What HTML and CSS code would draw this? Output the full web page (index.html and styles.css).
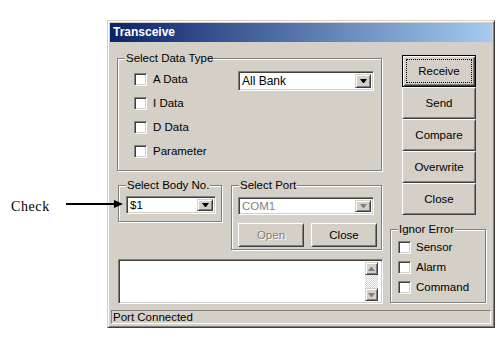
FILE: index.html
```html
<!DOCTYPE html>
<html lang="en">
<head>
  <meta charset="UTF-8" />
  <title>Transceive</title>
  <link rel="stylesheet" href="styles.css">
</head>
<body>
  <div class="page">
    <div class="note">
      <span class="note-text">Check</span>
      <svg class="note-arrow" width="60" height="10" viewBox="0 0 60 10">
        <line x1="0" y1="5" x2="50" y2="5" stroke="#000" stroke-width="2"/>
        <polygon points="48,1 57,5 48,9" fill="#000"/>
      </svg>
    </div>

    <div class="window">
      <div class="titlebar">Transceive</div>

      <div class="client">
        <div class="left">
          <fieldset class="group group-type">
            <legend>Select Data Type</legend>
            <div class="type-body">
              <div class="checks">
                <label class="check"><span class="box"></span>A Data</label>
                <label class="check"><span class="box"></span>I Data</label>
                <label class="check"><span class="box"></span>D Data</label>
                <label class="check"><span class="box"></span>Parameter</label>
              </div>
              <div class="combo combo-bank">
                <span class="combo-text">All Bank</span>
                <span class="drop"></span>
              </div>
            </div>
          </fieldset>

          <div class="mid-row">
            <fieldset class="group group-body">
              <legend>Select Body No.</legend>
              <div class="combo combo-body">
                <span class="combo-text">$1</span>
                <span class="drop"></span>
              </div>
            </fieldset>

            <fieldset class="group group-port">
              <legend>Select Port</legend>
              <div class="combo combo-port disabled">
                <span class="combo-text">COM1</span>
                <span class="drop"></span>
              </div>
              <div class="port-buttons">
                <div class="btn small disabled">Open</div>
                <div class="btn small">Close</div>
              </div>
            </fieldset>
          </div>

          <div class="log">
            <div class="scroll">
              <span class="scroll-btn up"></span>
              <span class="scroll-track"></span>
              <span class="scroll-btn down"></span>
            </div>
          </div>
        </div>

        <div class="right">
          <div class="actions">
            <div class="btn big default">Receive</div>
            <div class="btn big">Send</div>
            <div class="btn big">Compare</div>
            <div class="btn big">Overwrite</div>
            <div class="btn big">Close</div>
          </div>

          <fieldset class="group group-error">
            <legend>Ignor Error</legend>
            <div class="error-checks">
              <label class="check"><span class="box"></span>Sensor</label>
              <label class="check"><span class="box"></span>Alarm</label>
              <label class="check"><span class="box"></span>Command</label>
            </div>
          </fieldset>
        </div>
      </div>

      <div class="status">Port Connected</div>
    </div>
  </div>
</body>
</html>
```

FILE: styles.css
```css
body {
  margin: 0;
  background: #fff;
  font-family: "Liberation Sans", Arial, sans-serif;
  font-size: 11.5px;
  color: #000;
}
.page {
  position: relative;
  padding: 20px 0 0 107px;
}

/* callout on the left */
.note {
  position: absolute;
  left: 11px;
  top: 199px;
  width: 120px;
  height: 16px;
}
.note-text {
  font-family: "Liberation Serif", "Times New Roman", serif;
  font-size: 14px;
  letter-spacing: 0.6px;
  line-height: 16px;
}
.note-arrow {
  position: absolute;
  left: 55px;
  top: 0;
}

/* window frame */
.window {
  width: 388px;
  height: 308px;
  box-sizing: border-box;
  background: #d4d0c8;
  border: 1px solid;
  border-color: #d4d0c8 #404040 #404040 #d4d0c8;
  box-shadow: inset 1px 1px 0 #fff, inset -1px -1px 0 #808080;
  padding: 2px;
  display: flex;
  flex-direction: column;
}
.titlebar {
  height: 19px;
  line-height: 19px;
  padding-left: 3px;
  color: #fff;
  font-weight: bold;
  font-size: 12px;
  background: linear-gradient(to right, #0a246a, #a6caf0);
}
.client {
  flex: 1;
  display: flex;
  padding: 9px 0 0 7px;
}
.left {
  width: 266px;
}
.right {
  width: 97px;
  margin-left: 7px;
}

/* group boxes */
.group {
  margin: 0;
  padding: 0;
  min-width: 0;
  box-sizing: border-box;
  border: 1px solid #808080;
  box-shadow: 1px 1px 0 #fff, inset 1px 1px 0 #fff;
}
.group legend {
  margin-left: 7px;
  padding: 0 1px;
  line-height: 14px;
  background: #d4d0c8;
}
.group-type {
  width: 265px;
  height: 120px;
}
.type-body {
  display: flex;
  padding-left: 16px;
}
.checks {
  width: 104px;
  padding-top: 2px;
}
.check {
  display: flex;
  align-items: center;
  height: 24px;
  gap: 6px;
}
.box {
  width: 13px;
  height: 13px;
  box-sizing: border-box;
  background: #fff;
  border: 1px solid;
  border-color: #808080 #fff #fff #808080;
  box-shadow: inset 1px 1px 0 #404040, inset -1px -1px 0 #d4d0c8;
}

/* combo boxes */
.combo {
  display: flex;
  align-items: center;
  box-sizing: border-box;
  background: #fff;
  border: 1px solid;
  border-color: #808080 #fff #fff #808080;
  box-shadow: inset 1px 1px 0 #404040, inset -1px -1px 0 #d4d0c8;
  padding: 2px;
}
.combo-text {
  flex: 1;
  padding-left: 1px;
}
.drop {
  align-self: stretch;
  width: 16px;
  box-sizing: border-box;
  background: #d4d0c8;
  border: 1px solid;
  border-color: #d4d0c8 #404040 #404040 #d4d0c8;
  box-shadow: inset 1px 1px 0 #fff, inset -1px -1px 0 #808080;
  display: flex;
  align-items: center;
  justify-content: center;
}
.drop::after {
  content: "";
  width: 1px;
  height: 0;
  border-top: 4px solid #000;
  border-left: 3px solid transparent;
  border-right: 3px solid transparent;
}
.combo.disabled .combo-text {
  color: #808080;
}
.combo.disabled .drop::after {
  border-top-color: #808080;
}
.combo-bank {
  width: 136px;
  height: 20px;
  margin: 6px 0 0 0;
  font-size: 12px;
}
.mid-row {
  display: flex;
  align-items: flex-start;
  margin-top: 7px;
}
.group-body {
  width: 104px;
  height: 44px;
  margin-left: 1px;
}
.combo-body {
  width: 90px;
  height: 18px;
  margin: 4px 0 0 7px;
}
.group-port {
  width: 151px;
  height: 72px;
  margin-left: 9px;
}
.combo-port {
  width: 136px;
  height: 18px;
  margin: 5px 0 0 6px;
}
.port-buttons {
  display: flex;
  gap: 7px;
  margin: 8px 0 0 6px;
}

/* push buttons */
.btn {
  display: flex;
  align-items: center;
  justify-content: center;
  box-sizing: border-box;
  position: relative;
  border: 1px solid;
  border-color: #fff #404040 #404040 #fff;
  box-shadow: inset 1px 1px 0 #d4d0c8, inset -1px -1px 0 #808080;
}
.btn.small {
  width: 66px;
  height: 24px;
}
.btn.big {
  width: 74px;
  height: 32px;
}
.btn.disabled {
  color: #808080;
  text-shadow: 1px 1px 0 #fff;
}
.btn.default {
  border-color: #000;
  box-shadow: inset 1px 1px 0 #fff, inset -1px -1px 0 #404040,
              inset 2px 2px 0 #d4d0c8, inset -2px -2px 0 #808080;
}
.btn.default::before {
  content: "";
  position: absolute;
  inset: 3px;
  border: 1px dotted #000;
}
.actions {
  margin: 4px 0 0 12px;
}

/* log box */
.log {
  width: 265px;
  height: 45px;
  margin: 9px 0 0 1px;
  box-sizing: border-box;
  background: #fff;
  border: 1px solid;
  border-color: #808080 #fff #fff #808080;
  box-shadow: inset 1px 1px 0 #404040, inset -1px -1px 0 #d4d0c8;
  padding: 2px 4px 2px 2px;
  display: flex;
  justify-content: flex-end;
}
.scroll {
  width: 13px;
  display: flex;
  flex-direction: column;
}
.scroll-btn {
  height: 13px;
  box-sizing: border-box;
  background: #d4d0c8;
  border: 1px solid;
  border-color: #d4d0c8 #404040 #404040 #d4d0c8;
  box-shadow: inset 1px 1px 0 #fff, inset -1px -1px 0 #808080;
  display: flex;
  align-items: center;
  justify-content: center;
}
.scroll-btn::after {
  content: "";
  width: 1px;
  height: 0;
  border-left: 3px solid transparent;
  border-right: 3px solid transparent;
}
.scroll-btn.up::after {
  border-bottom: 4px solid #808080;
}
.scroll-btn.down::after {
  border-top: 4px solid #808080;
}
.scroll-track {
  flex: 1;
  background: repeating-conic-gradient(#d4d0c8 0 25%, #fff 0 50%) 0 0 / 2px 2px;
}

/* ignore error group */
.group-error {
  width: 96px;
  height: 81px;
  margin-top: 7px;
}
.error-checks {
  padding: 1px 0 0 7px;
}
.error-checks .check {
  height: 20px;
  gap: 5px;
}

/* status bar */
.status {
  height: 14px;
  box-sizing: border-box;
  margin: 0 1px 1px 1px;
  border: 1px solid;
  border-color: #808080 #fff #fff #808080;
  line-height: 12px;
  padding-left: 1px;
}
```
